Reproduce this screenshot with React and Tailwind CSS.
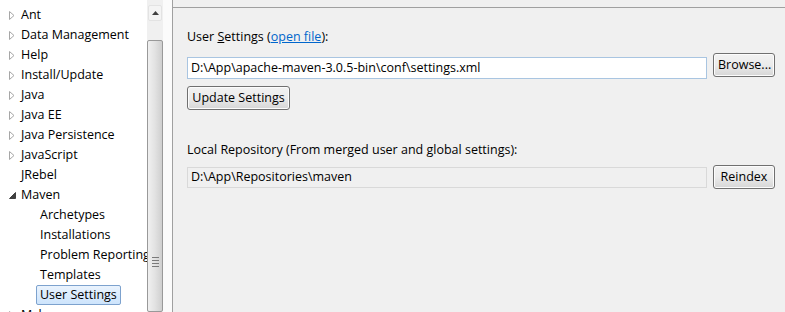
import React from "react";

const font = { fontFamily: '"Open Sans", "Noto Sans", sans-serif' };

const tree = [
  { label: "Ant", arrow: "closed" },
  { label: "Data Management", arrow: "closed" },
  { label: "Help", arrow: "closed" },
  { label: "Install/Update", arrow: "closed" },
  { label: "Java", arrow: "closed" },
  { label: "Java EE", arrow: "closed" },
  { label: "Java Persistence", arrow: "closed" },
  { label: "JavaScript", arrow: "closed" },
  { label: "JRebel", arrow: "none" },
  { label: "Maven", arrow: "open" },
  { label: "Archetypes", child: true },
  { label: "Installations", child: true },
  { label: "Problem Reporting", child: true },
  { label: "Templates", child: true },
  { label: "User Settings", child: true, selected: true },
  { label: "Mylyn", arrow: "closed" },
];

const Arrow = ({ kind }) => {
  if (kind === "closed")
    return (
      <svg width="6" height="9" viewBox="0 0 6 9" className="shrink-0">
        <path d="M0.5 0.5 L5 4.5 L0.5 8.5 Z" fill="white" stroke="#a6a6a6" />
      </svg>
    );
  if (kind === "open")
    return (
      <svg width="7" height="7" viewBox="0 0 7 7" className="shrink-0">
        <path d="M6.5 0.5 L6.5 6.5 L0.5 6.5 Z" fill="#404040" stroke="#404040" />
      </svg>
    );
  return <span className="w-[6px] shrink-0" />;
};

const WinButton = ({ children, className = "" }) => (
  <button
    className={
      "h-[24px] shrink-0 whitespace-nowrap rounded-[3px] border border-[#707070] bg-gradient-to-b from-[#f2f2f2] via-[#ebebeb] to-[#d6d6d6] px-[4px] text-[12.5px] text-black leading-none shadow-[inset_0_0_0_1px_#fcfcfc] " +
      className
    }
  >
    {children}
  </button>
);

const App = () => {
  return (
    <div className="flex h-[312px] w-[785px] overflow-hidden bg-white text-[12.5px] text-black" style={font}>
      {/* tree */}
      <div className="relative w-[147px] shrink-0 overflow-hidden pt-[5px]">
        {tree.map((item) => (
          <div key={item.label} className="flex h-[20px] items-center whitespace-nowrap">
            {item.child ? (
              <span
                className={
                  "ml-[36px] px-[3px] leading-[18px] " +
                  (item.selected ? "rounded-[2px] border border-[#7da2ce] bg-gradient-to-b from-[#eaf3fd] to-[#cde4fc]" : "border border-transparent")
                }
              >
                {item.label}
              </span>
            ) : (
              <>
                <span className="ml-[8px] flex w-[8px] justify-center">
                  <Arrow kind={item.arrow} />
                </span>
                <span className="ml-[5px]">{item.label}</span>
              </>
            )}
          </div>
        ))}
      </div>

      {/* scrollbar */}
      <div className="flex w-[16px] shrink-0 flex-col bg-[#f0f0f0] pt-[5px]">
        <div className="mx-[1px] flex h-[16px] items-center justify-center rounded-[2px] border border-[#e3e3e3] bg-[#f4f4f4]">
          <svg width="7" height="4" viewBox="0 0 7 4">
            <path d="M3.5 0 L7 4 L0 4 Z" fill="#404040" />
          </svg>
        </div>
        <div className="mt-[19px] flex flex-1 items-center justify-center rounded-[2px] border border-[#999] bg-gradient-to-r from-[#f0f0f0] via-[#e2e2e2] to-[#cfcfcf] pt-[172px]">
          <div className="flex flex-col gap-[2px]">
            <div className="h-px w-[7px] bg-[#7a7a7a]" />
            <div className="h-px w-[7px] bg-[#7a7a7a]" />
            <div className="h-px w-[7px] bg-[#7a7a7a]" />
            <div className="h-px w-[7px] bg-[#7a7a7a]" />
          </div>
        </div>
      </div>

      {/* splitter */}
      <div className="w-[10px] shrink-0 border-r border-[#a0a0a0] bg-[#fbfbfb]" />

      {/* main */}
      <div className="flex-1 bg-[#f0f0f0] pt-[7px]">
        <div className="h-full border-t border-[#a0a0a0] pl-[14px] pr-[10px] pt-[21px]">
          <div className="leading-[16px]">
            User <span className="underline">S</span>ettings (
            <span className="text-[#0066cc] underline">open file</span>):
          </div>
          <div className="mt-[8px] flex items-start gap-[6px]">
            <div className="mt-[4px] flex h-[22px] w-[520px] items-center border border-[#a9c5e1] bg-white px-[3px]">
              D:\App\apache-maven-3.0.5-bin\conf\settings.xml
            </div>
            <WinButton className="w-[62px]">Browse...</WinButton>
          </div>
          <WinButton className="mt-[7px] w-[103px]">Update Settings</WinButton>

          <div className="mt-[32px] leading-[16px]">
            Local Repository (From merged user and global settings):
          </div>
          <div className="mt-[7px] flex items-start gap-[6px]">
            <div className="mt-[2px] flex h-[21px] w-[520px] items-center border border-[#d9d9d9] bg-[#f0f0f0] px-[3px]">
              D:\App\Repositories\maven
            </div>
            <WinButton className="w-[62px]">Reindex</WinButton>
          </div>
        </div>
      </div>
    </div>
  );
};

export default App;
